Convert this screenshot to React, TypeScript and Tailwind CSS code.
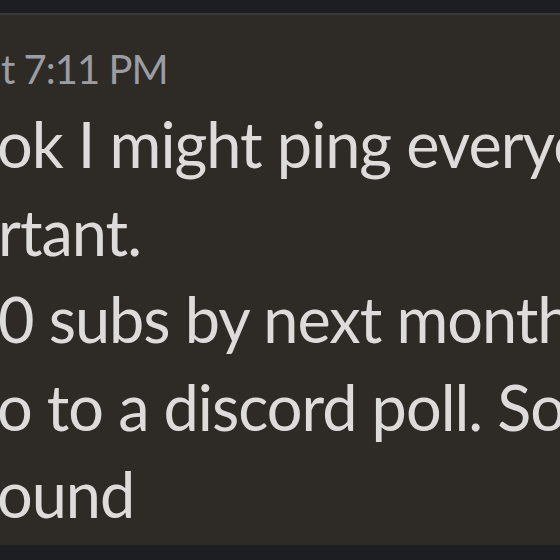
import React from "react";

const lines = [
  { text: "ok I might ping everyone", shift: "-ml-[3px]" },
  { text: "rtant.", shift: "-ml-[2px]" },
  { text: "0 subs by next month", shift: "-ml-[2px]" },
  { text: "o to a discord poll. So", shift: "-ml-[3px]" },
  { text: "ound", shift: "-ml-[3px]" },
];

export default function App() {
  return (
    <div className="w-[560px] h-[560px] overflow-hidden bg-[#2e2b26] flex flex-col" style={{ fontFamily: "Lato, 'Noto Sans', sans-serif" }}>
      <div className="h-[13px] shrink-0 bg-[#1d1e21]" />
      <div className="h-[2px] shrink-0 bg-[#3a3938]" />
      <div className="flex-1 overflow-hidden pt-[26px] flex flex-col">
        <div className="text-[40px] leading-[56px] tracking-[-1px] text-[#9b9da4] whitespace-nowrap ml-[1px]">
          t 7:11 PM
        </div>
        <div className="mt-[3px] flex flex-col">
          {lines.map((l) => (
            <div key={l.text} className={`text-[63px] leading-[87.5px] tracking-[-1px] text-[#dddcda] whitespace-nowrap ${l.shift}`}>
              {l.text}
            </div>
          ))}
        </div>
      </div>
      <div className="h-[15px] shrink-0 bg-[#1d1e21]" />
    </div>
  );
}
